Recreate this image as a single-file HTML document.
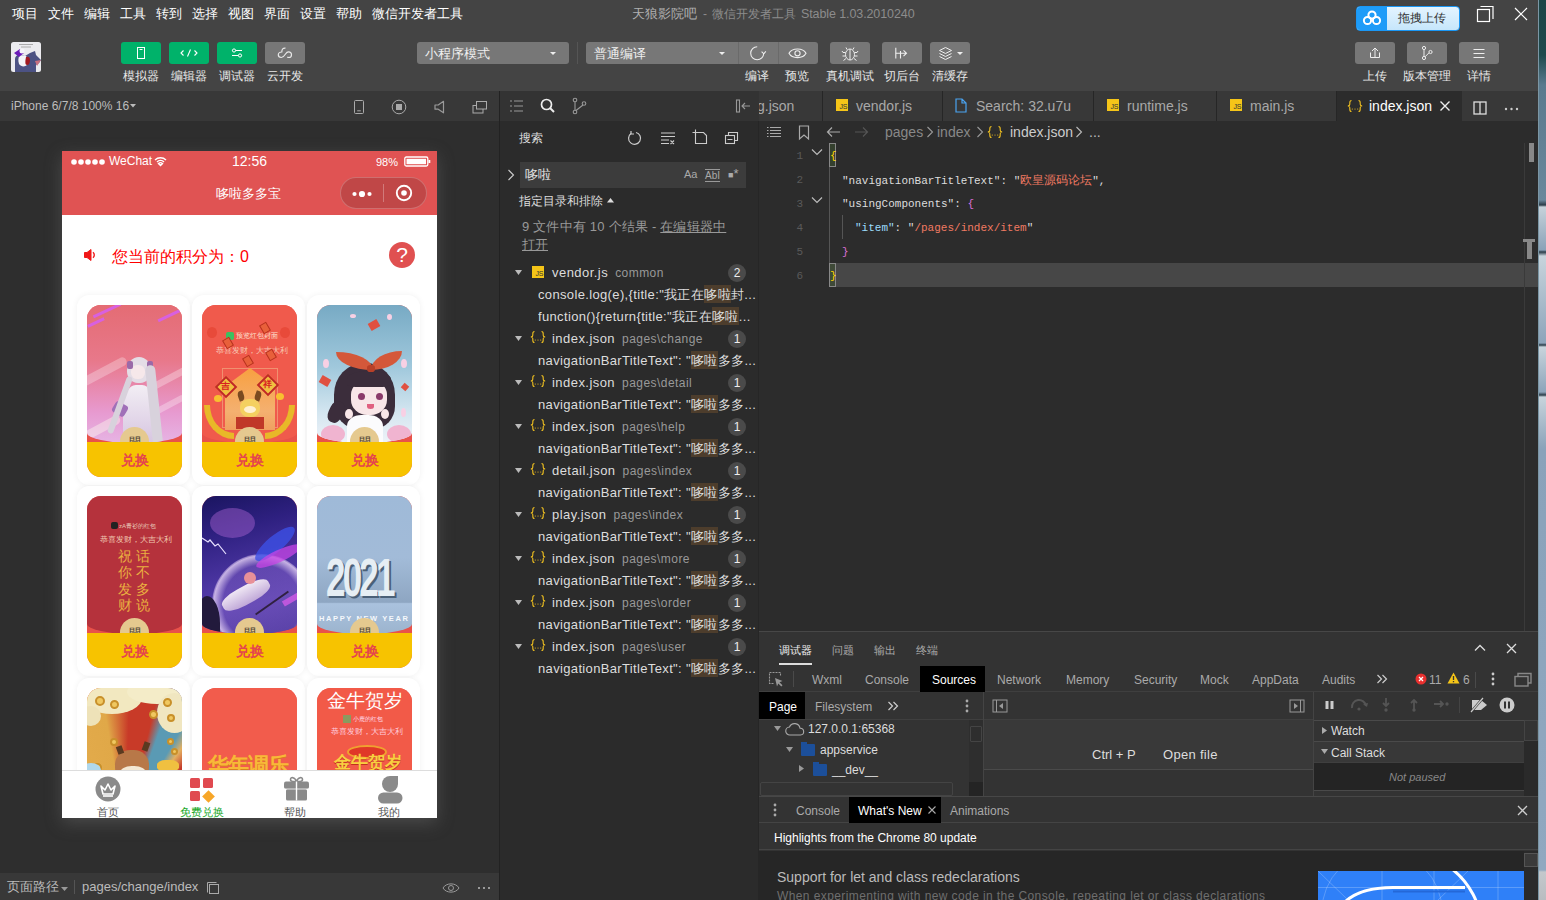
<!DOCTYPE html>
<html><head><meta charset="utf-8">
<style>
*{margin:0;padding:0;box-sizing:border-box}
html,body{width:1546px;height:900px;overflow:hidden;background:#2e2e2e}
body{font-family:"Liberation Sans",sans-serif;position:relative;color:#ddd}
.a{position:absolute}
.t{position:absolute;white-space:nowrap;line-height:1}
svg{position:absolute;overflow:visible}
/* top */
#top{left:0;top:0;width:1538px;height:91px;background:#444}
.menu{top:7px;font-size:13px;color:#fff}
.gbtn{top:42px;width:40px;height:22px;border-radius:3px;background:#00b26a}
.hbtn{top:42px;height:22px;border-radius:3px;background:#777}
.lbl{top:70px;font-size:12px;color:#e8e8e8;text-align:center;width:60px}
#strip{left:1538px;top:0;width:8px;height:900px;border-left:1px solid #7b96a4;background:linear-gradient(#1d4547 0,#1f4a4d 55px,#5a7a8e 85px,#6a889c 200px,#2a3c48 205px,#c6d2da 207px,#8aa2b8 250px,#2a3c48 252px,#c8d4dc 256px,#8ca4ba 343px,#2a3c48 345px,#c8d4dc 347px,#8ca4ba 392px,#2a3c48 395px,#c8d4dc 397px,#8ca4ba 447px,#8aa2ba 450px,#90a8c0 870px,#c4c8cc 872px,#b8bcc0 900px)}

#sim{left:0;top:91px;width:500px;height:809px;background:#2e2e2e}
#devbar{left:0;top:0;width:500px;height:30px;background:#383838}
#phone{left:62px;top:60px;width:375px;height:667px;background:#fff;overflow:hidden;box-shadow:0 5px 16px rgba(120,120,120,.38)}
.card{position:absolute;width:113px;height:190px;border-radius:12px;background:#fff;box-shadow:0 0 6px rgba(0,0,0,.06)}
.img{position:absolute;left:10px;top:10px;width:95px;height:172px;border-radius:14px;overflow:hidden;background:#e8524a}
.pic{position:absolute;left:0;top:0;width:95px;height:138px;overflow:hidden;border-radius:0 0 50% 50%/0 0 10px 10px}
.arc{display:none}
.coin{position:absolute;left:33px;top:122px;width:29px;height:29px;border-radius:50%;background:#e5c98f}
.coin:after{content:"開";position:absolute;left:0;top:9px;width:29px;text-align:center;font-size:12px;line-height:12px;color:#4a4030}
.yb{position:absolute;left:0;top:137px;width:95px;height:35px;background:#f7c300;color:#e5454d;font-size:14px;text-align:center;line-height:36px;font-weight:bold}
.tabi{position:absolute;top:656px;font-size:11px;color:#555;text-align:center;width:60px;line-height:1;white-space:nowrap}
</style></head>
<body>
<div id="strip" class="a"></div>
<div id="sim" class="a">
  <div id="devbar" class="a">
    <div class="t" style="left:11px;top:9px;font-size:12px;color:#bdbdbd">iPhone 6/7/8 100% 16</div>
    <svg style="left:130px;top:13px" width="6" height="4"><path d="M0 0h6l-3 3.5z" fill="#bbb"/></svg>
    <svg style="left:353px;top:8px" width="14" height="16"><rect x="1.5" y="1.5" width="9" height="13" rx="1" fill="none" stroke="#aaa" stroke-width="1"/><line x1="4.2" y1="11.8" x2="7.8" y2="11.8" stroke="#aaa"/></svg>
    <svg style="left:391px;top:8px" width="16" height="16"><circle cx="8" cy="8" r="6.8" fill="none" stroke="#aaa" stroke-width="1"/><rect x="5" y="5" width="6" height="6" fill="#aaa"/></svg>
    <svg style="left:433px;top:7px" width="14" height="18"><path d="M2 7h3.2L10.5 3.3v11.5L5.2 11.2H2z" fill="none" stroke="#999" stroke-width="1.2" stroke-linejoin="round"/></svg>
    <svg style="left:472px;top:9px" width="16" height="16"><rect x="1" y="5.5" width="10" height="7.5" fill="none" stroke="#aaa"/><rect x="4.5" y="1.5" width="10" height="7.5" fill="#383838" stroke="#aaa"/></svg>
  </div>
  <div id="phone" class="a">
    <div class="a" style="left:0;top:0;width:375px;height:64px;background:#e05353"></div>
    <svg style="left:9px;top:6px" width="60" height="10"><g fill="#fff"><circle cx="3" cy="5" r="2.8"/><circle cx="10" cy="5" r="2.8"/><circle cx="17" cy="5" r="2.8"/><circle cx="24" cy="5" r="2.8"/><circle cx="31" cy="5" r="2.8"/></g></svg>
    <div class="t" style="left:47px;top:4px;font-size:12px;color:#fff">WeChat</div>
    <svg style="left:92px;top:4px" width="13" height="12"><path d="M1 5a8 8 0 0 1 11 0M3 7a5 5 0 0 1 7 0M6.5 10.5l-2-2a3 3 0 0 1 4 0z" fill="none" stroke="#fff" stroke-width="1.4"/></svg>
    <div class="t" style="left:170px;top:3px;font-size:14px;color:#fff">12:56</div>
    <div class="t" style="left:314px;top:6px;font-size:11px;color:#fff">98%</div>
    <svg style="left:342px;top:5px" width="27" height="12"><rect x="0.8" y="1" width="23" height="9" rx="1.5" fill="none" stroke="#fff" stroke-width="1.3"/><rect x="2.5" y="2.8" width="19.5" height="5.4" fill="#fff"/><rect x="24.5" y="4" width="1.8" height="3" fill="#fff"/></svg>
    <div class="t" style="left:154px;top:36px;font-size:13px;color:#fff">哆啦多多宝</div>
    <div class="a" style="left:278px;top:26px;width:87px;height:32px;border-radius:16px;background:rgba(0,0,0,.14);border:1px solid rgba(255,255,255,.22)"></div>
    <div class="a" style="left:321px;top:33px;width:1px;height:18px;background:rgba(255,255,255,.28)"></div>
    <svg style="left:286px;top:38px" width="30" height="10"><g fill="#fff"><circle cx="6.5" cy="5" r="2.1"/><circle cx="14" cy="5" r="3.1"/><circle cx="21.5" cy="5" r="2.1"/></g></svg>
    <svg style="left:333px;top:33px" width="18" height="18"><circle cx="9" cy="9" r="7.2" fill="none" stroke="#fff" stroke-width="1.9"/><circle cx="9" cy="9" r="2.8" fill="#fff"/></svg>
    <svg style="left:21px;top:98px" width="14" height="12"><path d="M1.5 3.5h2.5l4-3v11l-4-3h-2.5z" fill="#f01818" stroke="#f01818" stroke-width="1" stroke-linejoin="round"/><path d="M10 3.3a3.5 3.5 0 0 1 0 5.4" fill="none" stroke="#f01818" stroke-width="1.4"/></svg>
    <div class="t" style="left:50px;top:98px;font-size:16px;color:#ff0000">您当前的积分为：0</div>
    <div class="a" style="left:327px;top:91px;width:26px;height:26px;border-radius:50%;background:#e05050"></div>
    <div class="t" style="left:332px;top:93px;font-size:21px;color:#fff;width:16px;text-align:center;font-weight:300">?</div>
    <div class="card" style="left:15px;top:144px"><div class="img"><div class="pic" style="background:linear-gradient(#e46c74 0%,#e8788a 40%,#e79ad0 78%,#e6b4e4)"><div class="a" style="left:-8px;top:62px;width:50px;height:9px;border-radius:5px;background:rgba(255,255,255,.28);transform:rotate(-28deg)"></div><div class="a" style="left:62px;top:70px;width:40px;height:7px;border-radius:4px;background:rgba(255,255,255,.3);transform:rotate(-28deg)"></div><div class="a" style="left:60px;top:98px;width:40px;height:6px;border-radius:4px;background:rgba(255,255,255,.3);transform:rotate(-28deg)"></div><div class="a" style="left:-5px;top:118px;width:40px;height:9px;border-radius:5px;background:rgba(255,255,240,.4);transform:rotate(-28deg)"></div><div class="a" style="left:5px;top:4px;width:30px;height:3px;background:#d860e0;transform:rotate(-25deg)"></div><div class="a" style="left:0;top:16px;width:18px;height:3px;background:#d860e0;transform:rotate(-25deg)"></div><div class="a" style="left:70px;top:9px;width:25px;height:3px;background:#d860e0;transform:rotate(-25deg)"></div><div class="a" style="left:40px;top:52px;width:24px;height:26px;border-radius:50% 50% 45% 45%;background:#e4dde6"></div><div class="a" style="left:44px;top:60px;width:14px;height:14px;border-radius:45%;background:#f6e8ea"></div><div class="a" style="left:40px;top:56px;width:6px;height:8px;background:#9a6aa8;border-radius:2px"></div><div class="a" style="left:60px;top:56px;width:6px;height:8px;background:#9a6aa8;border-radius:2px"></div><div class="a" style="left:36px;top:80px;width:32px;height:60px;border-radius:40% 40% 0 0;background:linear-gradient(#f2eef4,#d6c4e0)"></div><div class="a" style="left:26px;top:98px;width:14px;height:12px;background:#a070b8;border-radius:3px;transform:rotate(30deg)"></div><div class="a" style="left:62px;top:60px;width:10px;height:80px;border-radius:5px;background:#d8d2dc;transform:rotate(-6deg)"></div><div class="a" style="left:30px;top:70px;width:6px;height:60px;border-radius:3px;background:#d8d2dc;transform:rotate(20deg)"></div></div><div class="arc"></div><div class="coin"></div><div class="yb">兑换</div></div></div>
    <div class="card" style="left:130px;top:144px"><div class="img"><div class="pic" style="background:#f05a4c"><div class="a" style="left:5px;top:22px;width:10px;height:11px;border-radius:50%;background:#e84a3a"></div><div class="a" style="left:78px;top:22px;width:10px;height:11px;border-radius:50%;background:#e84a3a"></div><div class="a" style="left:24px;top:27px;width:8px;height:8px;border-radius:2px;background:#3cc060"></div><div class="t" style="left:34px;top:28px;font-size:6.5px;color:#fde0d0">预览红包封面</div><div class="t" style="left:14px;top:42px;font-size:8px;color:#f8c8b4">恭喜发财，大吉大利</div><div class="a" style="left:20px;top:63px;width:56px;height:60px;border:1.5px solid #f09070"></div><div class="a" style="left:23px;top:63px;width:50px;height:62px;clip-path:polygon(50% 0,100% 30%,100% 100%,0 100%,0 30%);background:linear-gradient(#f8a040,#f4b070 70%,#f0a060)"></div><div class="a" style="left:59px;top:18px;width:8px;height:10px;background:#e8603a;border:1px solid #b83020;transform:rotate(-30deg)"></div><div class="a" style="left:22px;top:33px;width:8px;height:10px;background:#e8603a;border:1px solid #b83020;transform:rotate(-30deg)"></div><div class="a" style="left:42px;top:51px;width:8px;height:10px;background:#e8603a;border:1px solid #b83020;transform:rotate(-30deg)"></div><div class="a" style="left:65px;top:45px;width:8px;height:10px;background:#e8603a;border:1px solid #b83020;transform:rotate(-30deg)"></div><div class="a" style="left:16px;top:74px;width:16px;height:16px;background:#f0c040;transform:rotate(45deg);border:2px solid #c02828"></div><div class="t" style="left:18.5px;top:77px;font-size:9px;color:#d82020;font-weight:bold">吉</div><div class="a" style="left:58px;top:72px;width:16px;height:16px;background:#f0c040;transform:rotate(45deg);border:2px solid #c02828"></div><div class="t" style="left:61px;top:75px;font-size:9px;color:#d82020;font-weight:bold">祥</div><div class="a" style="left:36px;top:86px;width:6px;height:10px;border-radius:50% 0;background:#7a4a20;transform:rotate(-20deg)"></div><div class="a" style="left:53px;top:86px;width:6px;height:10px;border-radius:0 50%;background:#7a4a20;transform:rotate(20deg)"></div><div class="a" style="left:38px;top:94px;width:20px;height:18px;border-radius:45%;background:#f4d060"></div><div class="a" style="left:42px;top:101px;width:12px;height:7px;border-radius:50%;background:#fff0d0"></div><div class="a" style="left:34px;top:112px;width:28px;height:12px;background:#c03828"></div><div class="a" style="left:12px;top:90px;width:8px;height:7px;border-radius:50%;background:#f8c030"></div><div class="a" style="left:74px;top:88px;width:8px;height:7px;border-radius:50%;background:#f8c030"></div><div class="a" style="left:2px;top:100px;width:30px;height:34px;border-radius:0 0 0 100%;border-left:6px solid #e8b828;border-bottom:6px solid #e8b828"></div><div class="a" style="left:63px;top:100px;width:30px;height:34px;border-radius:0 0 100% 0;border-right:6px solid #e8b828;border-bottom:6px solid #e8b828"></div></div><div class="arc"></div><div class="coin"></div><div class="yb">兑换</div></div></div>
    <div class="card" style="left:245px;top:144px"><div class="img"><div class="pic" style="background:linear-gradient(#77aac4 0%,#a0c8dc 45%,#d4e6f0 78%,#eef2f8)"><div class="a" style="left:17px;top:58px;width:61px;height:66px;border-radius:48% 48% 35% 40%;background:#3b2d3b"></div><div class="a" style="left:12px;top:96px;width:14px;height:22px;border-radius:40%;background:#3b2d3b;transform:rotate(25deg)"></div><div class="a" style="left:34px;top:76px;width:36px;height:34px;border-radius:40% 40% 45% 45%;background:#f8e6e8"></div><div class="a" style="left:30px;top:66px;width:44px;height:16px;border-radius:50% 50% 20% 20%;background:#3b2d3b"></div><div class="a" style="left:41px;top:88px;width:7px;height:7px;border-radius:50%;background:#8a3a6a"></div><div class="a" style="left:59px;top:88px;width:7px;height:7px;border-radius:50%;background:#8a3a6a"></div><div class="a" style="left:50px;top:99px;width:7px;height:5px;border-radius:0 0 50% 50%;background:#e06080"></div><div class="a" style="left:19px;top:47px;width:37px;height:18px;border-radius:0 100% 0 100%;background:#d4583a"></div><div class="a" style="left:54px;top:46px;width:31px;height:19px;border-radius:100% 0 100% 0;background:#d4583a"></div><div class="a" style="left:50px;top:60px;width:8px;height:7px;border-radius:40%;background:#b84028"></div><div class="a" style="left:30px;top:110px;width:36px;height:28px;border-radius:40% 40% 0 0;background:#fbfbfd"></div><div class="a" style="left:28px;top:104px;width:8px;height:10px;border-radius:50%;background:#f8e6e8"></div><div class="a" style="left:64px;top:104px;width:8px;height:10px;border-radius:50%;background:#f8e6e8"></div><div class="a" style="left:4px;top:120px;width:24px;height:18px;border-radius:50%;background:#f0b4d0"></div><div class="a" style="left:70px;top:120px;width:24px;height:18px;border-radius:50%;background:#f0b4d0"></div><div class="a" style="left:52px;top:16px;width:10px;height:8px;background:#e05040;transform:rotate(-30deg)"></div><div class="a" style="left:3px;top:72px;width:10px;height:8px;background:#e05040;transform:rotate(30deg)"></div><div class="a" style="left:85px;top:79px;width:6px;height:6px;background:#e05040;transform:rotate(40deg)"></div><div class="a" style="left:6px;top:54px;width:6px;height:9px;border-radius:50%;background:#f8d0e4"></div><div class="a" style="left:84px;top:54px;width:6px;height:9px;border-radius:50%;background:#f8d0e4"></div><div class="a" style="left:33px;top:9px;width:6px;height:4px;border-radius:50%;background:#f8d0e4"></div><div class="a" style="left:70px;top:9px;width:5px;height:6px;border-radius:50%;background:#f8d0e4"></div><div class="a" style="left:84px;top:103px;width:5px;height:9px;border-radius:50%;background:#f8d0e4"></div></div><div class="arc"></div><div class="coin"></div><div class="yb">兑换</div></div></div>
    <div class="card" style="left:15px;top:335px"><div class="img"><div class="pic" style="background:#b5323c"><div class="a" style="left:24px;top:26px;width:7px;height:7px;border-radius:2px;background:#222"></div><div class="t" style="left:32px;top:27px;font-size:6px;color:#e8c8b8">zA青衫的红包</div><div class="t" style="left:13px;top:40px;font-size:7.5px;color:#f0c8b0">恭喜发财，大吉大利</div><div class="t" style="left:31px;top:53px;font-size:14px;line-height:16.3px;color:#eab040;white-space:normal;width:40px;letter-spacing:4px;font-family:Liberation Serif,serif">祝话你不发多财说</div></div><div class="arc"></div><div class="coin"></div><div class="yb">兑换</div></div></div>
    <div class="card" style="left:130px;top:335px"><div class="img"><div class="pic" style="background:linear-gradient(165deg,#1a1560 0%,#2e2080 25%,#4a34a0 55%,#5a40b0 75%,#3a2890 100%)"><div class="a" style="left:8px;top:12px;width:45px;height:30px;border-radius:50%;background:rgba(170,100,210,.45)"></div><div class="a" style="left:10px;top:58px;width:100px;height:100px;border-radius:50%;background:radial-gradient(circle,rgba(120,90,190,.5) 55%,rgba(220,200,240,.85) 68%,rgba(160,130,210,.3) 72%,transparent 74%)"></div><div class="a" style="left:48px;top:40px;width:50px;height:16px;border-radius:50%;background:rgba(60,80,230,.8);transform:rotate(-40deg)"></div><div class="a" style="left:52px;top:54px;width:50px;height:12px;border-radius:50%;background:rgba(200,70,230,.75);transform:rotate(-25deg)"></div><div class="a" style="left:80px;top:100px;width:20px;height:6px;background:rgba(210,90,230,.8);transform:rotate(-30deg)"></div><svg style="left:0;top:40px" width="30" height="30"><path d="M0 2l6 4 2-2 5 6 3-2 8 10" fill="none" stroke="#e8e0ff" stroke-width="1.2"/></svg><div class="a" style="left:18px;top:90px;width:52px;height:18px;border-radius:40%;background:linear-gradient(#f0e8f4,#c0a8d8);transform:rotate(-28deg)"></div><div class="a" style="left:42px;top:76px;width:12px;height:12px;border-radius:50%;background:#e89098"></div><div class="a" style="left:50px;top:106px;width:40px;height:2px;background:#302040;transform:rotate(-35deg)"></div><div class="a" style="left:-4px;top:100px;width:22px;height:45px;background:#221a3c;border-radius:40% 60% 0 0"></div></div><div class="arc"></div><div class="coin"></div><div class="yb">兑换</div></div></div>
    <div class="card" style="left:245px;top:335px"><div class="img"><div class="pic" style="background:linear-gradient(#9fbad8 0,#a2bbd8 45%,#8ea6c2 77%,#aac2de 78%,#9cb4ce 100%)"><div class="t" style="left:9px;top:55px;font-size:38px;font-weight:bold;color:#e6eef4;letter-spacing:-3px;transform:scale(0.92,1.42);transform-origin:0 0;text-shadow:2px 1px 0 #4a6078">2021</div><div class="t" style="left:2px;top:119px;font-size:7.5px;font-weight:bold;color:#f4f8fc;letter-spacing:1.6px">HAPPY NEW YEAR</div></div><div class="arc"></div><div class="coin"></div><div class="yb">兑换</div></div></div>
    <div class="card" style="left:15px;top:527px"><div class="img"><div class="pic" style="background:conic-gradient(from -10deg at 40% 100%,#e0a848 0deg,#c83a28 12deg,#c83a28 24deg,#5a9ab4 30deg,#5a9ab4 40deg,#e4b060 46deg,#c43a2a 54deg,#c43a2a 68deg,#6aa8c0 74deg,#e0a040 85deg,#d89040 260deg,#e8b050 300deg,#e0a848 360deg)"><div class="a" style="left:-5px;top:-6px;width:60px;height:32px;border-radius:50%;background:#f2e8c0"></div><div class="a" style="left:40px;top:-8px;width:60px;height:24px;border-radius:50%;background:#f4ecc8"></div><div class="a" style="left:70px;top:5px;width:35px;height:40px;border-radius:50%;background:#f0e6c0"></div><div class="a" style="left:-6px;top:18px;width:20px;height:20px;border-radius:50%;background:#eee2b8"></div><div class="a" style="left:8px;top:8px;width:10px;height:10px;border-radius:50%;border:2px solid #c8902a;background:#f0c860"></div><div class="a" style="left:23px;top:12px;width:9px;height:9px;border-radius:50%;border:2px solid #c8902a;background:#f0c860"></div><div class="a" style="left:62px;top:22px;width:9px;height:9px;border-radius:50%;border:2px solid #c8902a;background:#f0c860"></div><div class="a" style="left:76px;top:10px;width:9px;height:9px;border-radius:50%;border:2px solid #c8902a;background:#f0c860"></div><div class="a" style="left:80px;top:26px;width:8px;height:8px;border-radius:50%;border:2px solid #c8902a;background:#f0c860"></div><div class="a" style="left:80px;top:50px;width:7px;height:7px;border-radius:50%;border:2px solid #c8902a;background:#f0c860"></div><div class="a" style="left:84px;top:60px;width:7px;height:7px;border-radius:50%;border:2px solid #c8902a;background:#f0c860"></div><div class="a" style="left:23px;top:50px;width:8px;height:8px;border-radius:50%;border:2px solid #c8902a;background:#f0c860"></div><div class="a" style="left:6px;top:75px;width:9px;height:9px;border-radius:50%;border:2px solid #c8902a;background:#f0c860"></div><div class="a" style="left:28px;top:62px;width:34px;height:32px;border-radius:45%;background:#b87848"></div><div class="a" style="left:30px;top:58px;width:6px;height:8px;background:#5a3a20;transform:rotate(-20deg)"></div><div class="a" style="left:56px;top:54px;width:6px;height:9px;background:#5a3a20;transform:rotate(20deg)"></div><div class="a" style="left:33px;top:78px;width:26px;height:16px;border-radius:45%;background:#f4e8d4"></div><div class="a" style="left:38px;top:84px;width:14px;height:4px;border-radius:40%;background:#8a3030"></div><div class="a" style="left:-6px;top:75px;width:20px;height:14px;border-radius:50%;background:#b0d8ec"></div><div class="a" style="left:70px;top:72px;width:22px;height:12px;border-radius:40%;background:#f0c040"></div></div><div class="arc"></div><div class="coin"></div><div class="yb">兑换</div></div></div>
    <div class="card" style="left:130px;top:527px"><div class="img"><div class="pic" style="background:#f25c4c"><div class="t" style="left:6px;top:66px;font-size:21px;font-weight:bold;color:#f8b838;letter-spacing:-1px;text-shadow:0 1px 0 #d88020">华年调乐</div></div><div class="arc"></div><div class="coin"></div><div class="yb">兑换</div></div></div>
    <div class="card" style="left:245px;top:527px"><div class="img"><div class="pic" style="background:#f25a48"><div class="t" style="left:10px;top:3px;font-size:19px;color:#fff">金牛贺岁</div><div class="a" style="left:26px;top:27px;width:8px;height:8px;background:#8a9a60"></div><div class="t" style="left:36px;top:28px;font-size:6px;color:#fde">小鹿的红包</div><div class="t" style="left:14px;top:40px;font-size:7.5px;color:#fcd">恭喜发财，大吉大利</div><div class="a" style="left:30px;top:57px;width:40px;height:14px;border-radius:50%;background:#e03828;border:2px solid #f0a030"></div><div class="t" style="left:17px;top:66px;font-size:17px;font-weight:bold;color:#f8d040;text-shadow:0 1px 0 #c03020">金牛贺岁</div></div><div class="arc"></div><div class="coin"></div><div class="yb">兑换</div></div></div>
    <div class="a" style="left:0;top:619px;width:375px;height:48px;background:#fff;border-top:1px solid #ddd"></div>
    <svg style="left:33px;top:625px" width="28" height="28"><circle cx="13" cy="13" r="12.5" fill="#8a8a8a"/><path d="M6 10l4 4 3-6 3 6 4-4-2 8h-10z" fill="none" stroke="#fff" stroke-width="1.6" stroke-linejoin="round"/><line x1="8" y1="20" x2="18" y2="20" stroke="#fff" stroke-width="1.6"/></svg>
    <svg style="left:127px;top:626px" width="30" height="28"><rect x="1" y="1" width="10" height="10" rx="1.5" fill="#e04a50"/><rect x="14" y="1" width="10" height="10" rx="1.5" fill="#e04a50"/><rect x="1" y="14" width="10" height="10" rx="1.5" fill="#e04a50"/><rect x="15" y="15" width="9" height="9" fill="#f7a628" transform="rotate(45 19.5 19.5)"/></svg>
    <svg style="left:220px;top:624px" width="30" height="28"><path d="M14.5 6.5C13 2 8.5 1.5 8.5 4.5c0 1.3 1.5 2 3 2zM14.5 6.5C16 2 20.5 1.5 20.5 4.5c0 1.3-1.5 2-3 2z" fill="none" stroke="#8a8a8a" stroke-width="1.6"/><rect x="2" y="6.5" width="25" height="7.5" rx="2" fill="#8a8a8a"/><rect x="4" y="14" width="21" height="11.5" rx="1.5" fill="#8a8a8a"/><line x1="14.5" y1="6.5" x2="14.5" y2="25.5" stroke="#fff" stroke-width="1.4"/><line x1="2" y1="14" x2="27" y2="14" stroke="#fff" stroke-width="0.8"/></svg>
    <svg style="left:314px;top:623px" width="28" height="30"><path d="M6 10a8 8 0 0 1 8-8h8v8a8 8 0 0 1-16 0z" fill="#8a8a8a"/><rect x="2" y="18.5" width="24.5" height="11" rx="5.5" fill="#8a8a8a"/></svg>
    <div class="tabi" style="left:16px">首页</div>
    <div class="tabi" style="left:110px;color:#16a826">免费兑换</div>
    <div class="tabi" style="left:203px">帮助</div>
    <div class="tabi" style="left:297px">我的</div>
  </div>
  <div class="a" style="left:0;top:782px;width:500px;height:27px;background:#383838"></div>
  <div class="t" style="left:7px;top:789px;font-size:13px;color:#bbb">页面路径</div>
  <svg style="left:61px;top:796px" width="7" height="5"><path d="M0 0h7l-3.5 4z" fill="#999"/></svg>
  <div class="a" style="left:74px;top:789px;width:1px;height:14px;background:#555"></div>
  <div class="t" style="left:82px;top:789px;font-size:13px;color:#bbb">pages/change/index</div>
  <svg style="left:206px;top:790px" width="14" height="14"><path d="M1.5 11.5v-10h9" fill="none" stroke="#aaa"/><rect x="3.5" y="3.5" width="9" height="9" fill="none" stroke="#aaa"/></svg>
  <svg style="left:442px;top:791px" width="18" height="12"><path d="M1 6c3-5.5 13-5.5 16 0-3 5.5-13 5.5-16 0z" fill="none" stroke="#999"/><circle cx="9" cy="6" r="2.5" fill="none" stroke="#999"/></svg>
  <svg style="left:477px;top:795px" width="14" height="4"><g fill="#999"><rect x="1" y="1" width="2" height="2"/><rect x="6" y="1" width="2" height="2"/><rect x="11" y="1" width="2" height="2"/></g></svg>
</div>
<div class="a" style="left:499px;top:91px;width:1px;height:809px;background:#222"></div>
<div id="search" class="a" style="left:500px;top:91px;width:259px;height:809px;background:#2b2b2b">
  <div class="a" style="left:0;top:0;width:259px;height:30px;background:#333"></div>
  <svg style="left:9px;top:8px" width="16" height="14"><g stroke="#999" stroke-width="1.2"><path d="M1 2h2M1 7h2M1 12h2M5 2h9M5 7h9M5 12h9"/></g></svg>
  <svg style="left:40px;top:7px" width="16" height="16"><circle cx="6.5" cy="6.5" r="5" fill="none" stroke="#eee" stroke-width="1.7"/><path d="M10 10l4 4" stroke="#eee" stroke-width="1.9"/></svg>
  <svg style="left:72px;top:6px" width="16" height="18"><g fill="none" stroke="#999" stroke-width="1.1"><circle cx="3" cy="3" r="1.8"/><circle cx="3" cy="15" r="1.8"/><circle cx="12" cy="6.5" r="1.8"/><path d="M3 4.8v8.4M11 8l-7 5.5"/></g></svg>
  <svg style="left:236px;top:8px" width="16" height="14"><g fill="none" stroke="#999" stroke-width="1.1"><rect x="0.5" y="1" width="3" height="12"/><path d="M14 7h-8M9 4l-3 3 3 3"/></g></svg>
  <div class="t" style="left:19px;top:41px;font-size:12px;color:#ddd">搜索</div>
  <svg style="left:127px;top:39px" width="16" height="16"><path d="M4 3.5a6 6 0 1 0 5-1" fill="none" stroke="#ccc" stroke-width="1.2"/><path d="M4 1v3h3" fill="none" stroke="#ccc" stroke-width="1.2"/></svg>
  <svg style="left:160px;top:40px" width="16" height="14"><g stroke="#ccc" stroke-width="1.1" fill="none"><path d="M1 2h14M1 5.5h14M1 9h8M1 12.5h8M10.5 9.5l3.5 3.5M14 9.5l-3.5 3.5"/></g></svg>
  <svg style="left:192px;top:38px" width="16" height="16"><g stroke="#ccc" stroke-width="1.1" fill="none"><path d="M3.5 3.5v11h11v-8l-3-3h-8"/><path d="M0.5 3.5h6M3.5 0.5v6"/></g></svg>
  <svg style="left:225px;top:40px" width="16" height="14"><g stroke="#ccc" stroke-width="1.1" fill="none"><rect x="0.5" y="4.5" width="9" height="8"/><path d="M3.5 4.5v-3h9v8h-3M2.5 8.5h5"/></g></svg>
  <svg style="left:7px;top:78px" width="8" height="12"><path d="M1.5 1l5 5-5 5" fill="none" stroke="#ccc" stroke-width="1.1"/></svg>
  <div class="a" style="left:20px;top:71px;width:226px;height:26px;background:#3c3c3c"></div>
  <div class="t" style="left:25px;top:77px;font-size:13px;color:#e0e0e0">哆啦</div>
  <div class="t" style="left:184px;top:78px;font-size:11px;color:#aaa">Aa</div>
  <div class="t" style="left:205px;top:78px;font-size:10px;color:#aaa;border-top:1px solid #999;border-bottom:1px solid #999;line-height:11px">AbI</div>
  <div class="t" style="left:228px;top:76px;font-size:13px;color:#aaa"><span style="font-size:9px">■</span>*</div>
  <div class="t" style="left:19px;top:104px;font-size:12px;color:#ddd">指定目录和排除</div>
  <svg style="left:107px;top:106px" width="8" height="6"><path d="M0 5.5h7l-3.5-4.5z" fill="#ddd"/></svg>
  <div class="t" style="left:22px;top:129px;font-size:13px;color:#999;letter-spacing:.2px">9 文件中有 10 个结果 - <span style="text-decoration:underline">在编辑器中</span></div>
  <div class="t" style="left:22px;top:147px;font-size:13px;color:#999;text-decoration:underline">打开</div>
  <svg style="left:15px;top:179px" width="8" height="6"><path d="M0 0h7l-3.5 5z" fill="#bbb"/></svg>
  <div class="a" style="left:32px;top:175px;width:12px;height:12px;background:#f5c518"><div class="t" style="left:3.5px;top:4px;font-size:7px;color:#333;letter-spacing:-.3px">JS</div></div>
  <div class="t" style="left:52px;top:175px;font-size:13px;color:#ddd;letter-spacing:.45px"><span>vendor.js</span> <span style="font-size:12px;color:#999;margin-left:3px">common</span></div>
  <div class="a" style="left:228px;top:173px;width:18px;height:18px;border-radius:50%;background:#4a4a4a"><div class="t" style="left:0;top:3px;width:18px;text-align:center;font-size:12px;color:#eee">2</div></div>
  <div class="t" style="left:38px;top:194px;font-size:13px;line-height:19px;color:#ddd;width:222px;overflow:hidden;letter-spacing:.35px">console.log(e),{title:"我正在<span style="background:#4d3d2c;padding:3px 0 1px">哆啦</span>封...</div>
  <div class="t" style="left:38px;top:216px;font-size:13px;line-height:19px;color:#ddd;width:222px;overflow:hidden;letter-spacing:.35px">function(){return{title:"我正在<span style="background:#4d3d2c;padding:3px 0 1px">哆啦</span>...</div>
  <svg style="left:15px;top:245px" width="8" height="6"><path d="M0 0h7l-3.5 5z" fill="#bbb"/></svg>
  <svg style="left:30px;top:240px" width="16" height="12"><path d="M4.5 0.5C3 0.5 2.8 1.3 2.8 2.8V4.3C2.8 5.3 2 6 0.8 6 2 6 2.8 6.7 2.8 7.7V9.2C2.8 10.7 3 11.5 4.5 11.5M11.5 0.5C13 0.5 13.2 1.3 13.2 2.8V4.3C13.2 5.3 14 6 15.2 6 14 6 13.2 6.7 13.2 7.7V9.2C13.2 10.7 13 11.5 11.5 11.5" fill="none" stroke="#f0c020" stroke-width="1.1"/><g fill="#f0c020"><circle cx="5.3" cy="9" r=".6"/><circle cx="8" cy="9" r=".6"/><circle cx="10.7" cy="9" r=".6"/></g></svg>
  <div class="t" style="left:52px;top:241px;font-size:13px;color:#ddd;letter-spacing:.45px"><span>index.json</span> <span style="font-size:12px;color:#999;margin-left:3px">pages\change</span></div>
  <div class="a" style="left:228px;top:239px;width:18px;height:18px;border-radius:50%;background:#4a4a4a"><div class="t" style="left:0;top:3px;width:18px;text-align:center;font-size:12px;color:#eee">1</div></div>
  <div class="t" style="left:38px;top:260px;font-size:13px;line-height:19px;color:#ddd;width:222px;overflow:hidden;letter-spacing:.35px">navigationBarTitleText": "<span style="background:#4d3d2c;padding:3px 0 1px">哆啦</span>多多...</div>
  <svg style="left:15px;top:289px" width="8" height="6"><path d="M0 0h7l-3.5 5z" fill="#bbb"/></svg>
  <svg style="left:30px;top:284px" width="16" height="12"><path d="M4.5 0.5C3 0.5 2.8 1.3 2.8 2.8V4.3C2.8 5.3 2 6 0.8 6 2 6 2.8 6.7 2.8 7.7V9.2C2.8 10.7 3 11.5 4.5 11.5M11.5 0.5C13 0.5 13.2 1.3 13.2 2.8V4.3C13.2 5.3 14 6 15.2 6 14 6 13.2 6.7 13.2 7.7V9.2C13.2 10.7 13 11.5 11.5 11.5" fill="none" stroke="#f0c020" stroke-width="1.1"/><g fill="#f0c020"><circle cx="5.3" cy="9" r=".6"/><circle cx="8" cy="9" r=".6"/><circle cx="10.7" cy="9" r=".6"/></g></svg>
  <div class="t" style="left:52px;top:285px;font-size:13px;color:#ddd;letter-spacing:.45px"><span>index.json</span> <span style="font-size:12px;color:#999;margin-left:3px">pages\detail</span></div>
  <div class="a" style="left:228px;top:283px;width:18px;height:18px;border-radius:50%;background:#4a4a4a"><div class="t" style="left:0;top:3px;width:18px;text-align:center;font-size:12px;color:#eee">1</div></div>
  <div class="t" style="left:38px;top:304px;font-size:13px;line-height:19px;color:#ddd;width:222px;overflow:hidden;letter-spacing:.35px">navigationBarTitleText": "<span style="background:#4d3d2c;padding:3px 0 1px">哆啦</span>多多...</div>
  <svg style="left:15px;top:333px" width="8" height="6"><path d="M0 0h7l-3.5 5z" fill="#bbb"/></svg>
  <svg style="left:30px;top:328px" width="16" height="12"><path d="M4.5 0.5C3 0.5 2.8 1.3 2.8 2.8V4.3C2.8 5.3 2 6 0.8 6 2 6 2.8 6.7 2.8 7.7V9.2C2.8 10.7 3 11.5 4.5 11.5M11.5 0.5C13 0.5 13.2 1.3 13.2 2.8V4.3C13.2 5.3 14 6 15.2 6 14 6 13.2 6.7 13.2 7.7V9.2C13.2 10.7 13 11.5 11.5 11.5" fill="none" stroke="#f0c020" stroke-width="1.1"/><g fill="#f0c020"><circle cx="5.3" cy="9" r=".6"/><circle cx="8" cy="9" r=".6"/><circle cx="10.7" cy="9" r=".6"/></g></svg>
  <div class="t" style="left:52px;top:329px;font-size:13px;color:#ddd;letter-spacing:.45px"><span>index.json</span> <span style="font-size:12px;color:#999;margin-left:3px">pages\help</span></div>
  <div class="a" style="left:228px;top:327px;width:18px;height:18px;border-radius:50%;background:#4a4a4a"><div class="t" style="left:0;top:3px;width:18px;text-align:center;font-size:12px;color:#eee">1</div></div>
  <div class="t" style="left:38px;top:348px;font-size:13px;line-height:19px;color:#ddd;width:222px;overflow:hidden;letter-spacing:.35px">navigationBarTitleText": "<span style="background:#4d3d2c;padding:3px 0 1px">哆啦</span>多多...</div>
  <svg style="left:15px;top:377px" width="8" height="6"><path d="M0 0h7l-3.5 5z" fill="#bbb"/></svg>
  <svg style="left:30px;top:372px" width="16" height="12"><path d="M4.5 0.5C3 0.5 2.8 1.3 2.8 2.8V4.3C2.8 5.3 2 6 0.8 6 2 6 2.8 6.7 2.8 7.7V9.2C2.8 10.7 3 11.5 4.5 11.5M11.5 0.5C13 0.5 13.2 1.3 13.2 2.8V4.3C13.2 5.3 14 6 15.2 6 14 6 13.2 6.7 13.2 7.7V9.2C13.2 10.7 13 11.5 11.5 11.5" fill="none" stroke="#f0c020" stroke-width="1.1"/><g fill="#f0c020"><circle cx="5.3" cy="9" r=".6"/><circle cx="8" cy="9" r=".6"/><circle cx="10.7" cy="9" r=".6"/></g></svg>
  <div class="t" style="left:52px;top:373px;font-size:13px;color:#ddd;letter-spacing:.45px"><span>detail.json</span> <span style="font-size:12px;color:#999;margin-left:3px">pages\index</span></div>
  <div class="a" style="left:228px;top:371px;width:18px;height:18px;border-radius:50%;background:#4a4a4a"><div class="t" style="left:0;top:3px;width:18px;text-align:center;font-size:12px;color:#eee">1</div></div>
  <div class="t" style="left:38px;top:392px;font-size:13px;line-height:19px;color:#ddd;width:222px;overflow:hidden;letter-spacing:.35px">navigationBarTitleText": "<span style="background:#4d3d2c;padding:3px 0 1px">哆啦</span>多多...</div>
  <svg style="left:15px;top:421px" width="8" height="6"><path d="M0 0h7l-3.5 5z" fill="#bbb"/></svg>
  <svg style="left:30px;top:416px" width="16" height="12"><path d="M4.5 0.5C3 0.5 2.8 1.3 2.8 2.8V4.3C2.8 5.3 2 6 0.8 6 2 6 2.8 6.7 2.8 7.7V9.2C2.8 10.7 3 11.5 4.5 11.5M11.5 0.5C13 0.5 13.2 1.3 13.2 2.8V4.3C13.2 5.3 14 6 15.2 6 14 6 13.2 6.7 13.2 7.7V9.2C13.2 10.7 13 11.5 11.5 11.5" fill="none" stroke="#f0c020" stroke-width="1.1"/><g fill="#f0c020"><circle cx="5.3" cy="9" r=".6"/><circle cx="8" cy="9" r=".6"/><circle cx="10.7" cy="9" r=".6"/></g></svg>
  <div class="t" style="left:52px;top:417px;font-size:13px;color:#ddd;letter-spacing:.45px"><span>play.json</span> <span style="font-size:12px;color:#999;margin-left:3px">pages\index</span></div>
  <div class="a" style="left:228px;top:415px;width:18px;height:18px;border-radius:50%;background:#4a4a4a"><div class="t" style="left:0;top:3px;width:18px;text-align:center;font-size:12px;color:#eee">1</div></div>
  <div class="t" style="left:38px;top:436px;font-size:13px;line-height:19px;color:#ddd;width:222px;overflow:hidden;letter-spacing:.35px">navigationBarTitleText": "<span style="background:#4d3d2c;padding:3px 0 1px">哆啦</span>多多...</div>
  <svg style="left:15px;top:465px" width="8" height="6"><path d="M0 0h7l-3.5 5z" fill="#bbb"/></svg>
  <svg style="left:30px;top:460px" width="16" height="12"><path d="M4.5 0.5C3 0.5 2.8 1.3 2.8 2.8V4.3C2.8 5.3 2 6 0.8 6 2 6 2.8 6.7 2.8 7.7V9.2C2.8 10.7 3 11.5 4.5 11.5M11.5 0.5C13 0.5 13.2 1.3 13.2 2.8V4.3C13.2 5.3 14 6 15.2 6 14 6 13.2 6.7 13.2 7.7V9.2C13.2 10.7 13 11.5 11.5 11.5" fill="none" stroke="#f0c020" stroke-width="1.1"/><g fill="#f0c020"><circle cx="5.3" cy="9" r=".6"/><circle cx="8" cy="9" r=".6"/><circle cx="10.7" cy="9" r=".6"/></g></svg>
  <div class="t" style="left:52px;top:461px;font-size:13px;color:#ddd;letter-spacing:.45px"><span>index.json</span> <span style="font-size:12px;color:#999;margin-left:3px">pages\more</span></div>
  <div class="a" style="left:228px;top:459px;width:18px;height:18px;border-radius:50%;background:#4a4a4a"><div class="t" style="left:0;top:3px;width:18px;text-align:center;font-size:12px;color:#eee">1</div></div>
  <div class="t" style="left:38px;top:480px;font-size:13px;line-height:19px;color:#ddd;width:222px;overflow:hidden;letter-spacing:.35px">navigationBarTitleText": "<span style="background:#4d3d2c;padding:3px 0 1px">哆啦</span>多多...</div>
  <svg style="left:15px;top:509px" width="8" height="6"><path d="M0 0h7l-3.5 5z" fill="#bbb"/></svg>
  <svg style="left:30px;top:504px" width="16" height="12"><path d="M4.5 0.5C3 0.5 2.8 1.3 2.8 2.8V4.3C2.8 5.3 2 6 0.8 6 2 6 2.8 6.7 2.8 7.7V9.2C2.8 10.7 3 11.5 4.5 11.5M11.5 0.5C13 0.5 13.2 1.3 13.2 2.8V4.3C13.2 5.3 14 6 15.2 6 14 6 13.2 6.7 13.2 7.7V9.2C13.2 10.7 13 11.5 11.5 11.5" fill="none" stroke="#f0c020" stroke-width="1.1"/><g fill="#f0c020"><circle cx="5.3" cy="9" r=".6"/><circle cx="8" cy="9" r=".6"/><circle cx="10.7" cy="9" r=".6"/></g></svg>
  <div class="t" style="left:52px;top:505px;font-size:13px;color:#ddd;letter-spacing:.45px"><span>index.json</span> <span style="font-size:12px;color:#999;margin-left:3px">pages\order</span></div>
  <div class="a" style="left:228px;top:503px;width:18px;height:18px;border-radius:50%;background:#4a4a4a"><div class="t" style="left:0;top:3px;width:18px;text-align:center;font-size:12px;color:#eee">1</div></div>
  <div class="t" style="left:38px;top:524px;font-size:13px;line-height:19px;color:#ddd;width:222px;overflow:hidden;letter-spacing:.35px">navigationBarTitleText": "<span style="background:#4d3d2c;padding:3px 0 1px">哆啦</span>多多...</div>
  <svg style="left:15px;top:553px" width="8" height="6"><path d="M0 0h7l-3.5 5z" fill="#bbb"/></svg>
  <svg style="left:30px;top:548px" width="16" height="12"><path d="M4.5 0.5C3 0.5 2.8 1.3 2.8 2.8V4.3C2.8 5.3 2 6 0.8 6 2 6 2.8 6.7 2.8 7.7V9.2C2.8 10.7 3 11.5 4.5 11.5M11.5 0.5C13 0.5 13.2 1.3 13.2 2.8V4.3C13.2 5.3 14 6 15.2 6 14 6 13.2 6.7 13.2 7.7V9.2C13.2 10.7 13 11.5 11.5 11.5" fill="none" stroke="#f0c020" stroke-width="1.1"/><g fill="#f0c020"><circle cx="5.3" cy="9" r=".6"/><circle cx="8" cy="9" r=".6"/><circle cx="10.7" cy="9" r=".6"/></g></svg>
  <div class="t" style="left:52px;top:549px;font-size:13px;color:#ddd;letter-spacing:.45px"><span>index.json</span> <span style="font-size:12px;color:#999;margin-left:3px">pages\user</span></div>
  <div class="a" style="left:228px;top:547px;width:18px;height:18px;border-radius:50%;background:#4a4a4a"><div class="t" style="left:0;top:3px;width:18px;text-align:center;font-size:12px;color:#eee">1</div></div>
  <div class="t" style="left:38px;top:568px;font-size:13px;line-height:19px;color:#ddd;width:222px;overflow:hidden;letter-spacing:.35px">navigationBarTitleText": "<span style="background:#4d3d2c;padding:3px 0 1px">哆啦</span>多多...</div>
  <div class="a" style="left:258px;top:30px;width:1px;height:779px;background:#262626"></div>
</div>
<div id="editor" class="a" style="left:759px;top:91px;width:779px;height:540px;background:#2c2c2c;overflow:hidden">
  <div class="a" style="left:0;top:0;width:779px;height:30px;background:#383838"></div>
  <!-- tabs -->
  <div class="a" style="left:0;top:0;width:64px;height:30px;background:#383838;border-right:1px solid #262626"></div>
  <div class="t" style="left:-2px;top:8px;font-size:14px;color:#a8a8a8">g.json</div>
  <div class="a" style="left:64px;top:0;width:120px;height:30px;border-right:1px solid #262626"></div>
  <div class="a" style="left:77px;top:8px;width:12px;height:12px;background:#f5c518"><div class="t" style="left:3.5px;top:4px;font-size:7px;color:#333;letter-spacing:-.3px">JS</div></div>
  <div class="t" style="left:97px;top:8px;font-size:14px;color:#a8a8a8">vendor.js</div>
  <div class="a" style="left:184px;top:0;width:151px;height:30px;border-right:1px solid #262626"></div>
  <svg style="left:196px;top:7px" width="12" height="15"><path d="M1 1h6l4 4v9h-10z M7 1v4h4" fill="none" stroke="#4aa3f0" stroke-width="1.2"/></svg>
  <div class="t" style="left:217px;top:8px;font-size:14px;color:#a8a8a8">Search: 32.u7u</div>
  <div class="a" style="left:335px;top:0;width:123px;height:30px;border-right:1px solid #262626"></div>
  <div class="a" style="left:348px;top:8px;width:12px;height:12px;background:#f5c518"><div class="t" style="left:3.5px;top:4px;font-size:7px;color:#333;letter-spacing:-.3px">JS</div></div>
  <div class="t" style="left:368px;top:8px;font-size:14px;color:#a8a8a8">runtime.js</div>
  <div class="a" style="left:458px;top:0;width:120px;height:30px;border-right:1px solid #262626"></div>
  <div class="a" style="left:471px;top:8px;width:12px;height:12px;background:#f5c518"><div class="t" style="left:3.5px;top:4px;font-size:7px;color:#333;letter-spacing:-.3px">JS</div></div>
  <div class="t" style="left:491px;top:8px;font-size:14px;color:#a8a8a8">main.js</div>
  <div class="a" style="left:578px;top:0;width:125px;height:30px;background:#2c2c2c"></div>
  <svg style="left:588px;top:9px" width="16" height="12"><path d="M4.5 0.5C3 0.5 2.8 1.3 2.8 2.8V4.3C2.8 5.3 2 6 0.8 6 2 6 2.8 6.7 2.8 7.7V9.2C2.8 10.7 3 11.5 4.5 11.5M11.5 0.5C13 0.5 13.2 1.3 13.2 2.8V4.3C13.2 5.3 14 6 15.2 6 14 6 13.2 6.7 13.2 7.7V9.2C13.2 10.7 13 11.5 11.5 11.5" fill="none" stroke="#f0c020" stroke-width="1.1"/><g fill="#f0c020"><circle cx="5.3" cy="9" r=".6"/><circle cx="8" cy="9" r=".6"/><circle cx="10.7" cy="9" r=".6"/></g></svg>
  <div class="t" style="left:610px;top:8px;font-size:14px;color:#fff">index.json</div>
  <svg style="left:680px;top:9px" width="12" height="12"><path d="M1.5 1.5l9 9M10.5 1.5l-9 9" stroke="#eee" stroke-width="1.4"/></svg>
  <svg style="left:714px;top:10px" width="14" height="14"><rect x="1" y="1" width="12" height="12" fill="none" stroke="#ddd" stroke-width="1.3"/><line x1="7" y1="1" x2="7" y2="13" stroke="#ddd" stroke-width="1.3"/></svg>
  <svg style="left:745px;top:16px" width="16" height="4"><g fill="#ccc"><circle cx="2" cy="2" r="1.2"/><circle cx="7.5" cy="2" r="1.2"/><circle cx="13" cy="2" r="1.2"/></g></svg>
  <!-- breadcrumb -->
  <svg style="left:7px;top:35px" width="16" height="13"><g stroke="#aaa" stroke-width="1.1"><path d="M1 1.5h1.5M1 4.5h1.5M1 7.5h1.5M1 10.5h1.5M4 1.5h11M4 4.5h11M4 7.5h11M4 10.5h11"/></g></svg>
  <svg style="left:39px;top:34px" width="12" height="15"><path d="M1.5 1h9v13l-4.5-4-4.5 4z" fill="none" stroke="#aaa" stroke-width="1.2"/></svg>
  <svg style="left:67px;top:35px" width="15" height="12"><path d="M14 6h-12M6 1.5l-4.5 4.5 4.5 4.5" fill="none" stroke="#aaa" stroke-width="1.2"/></svg>
  <svg style="left:95px;top:35px" width="15" height="12"><path d="M1 6h12M9 1.5l4.5 4.5-4.5 4.5" fill="none" stroke="#555" stroke-width="1.2"/></svg>
  <div class="t" style="left:126px;top:34px;font-size:14px;color:#888">pages</div>
  <svg style="left:167px;top:35px" width="8" height="12"><path d="M1.5 1l5 5-5 5" fill="none" stroke="#999" stroke-width="1.1"/></svg>
  <div class="t" style="left:178px;top:34px;font-size:14px;color:#888">index</div>
  <svg style="left:217px;top:35px" width="8" height="12"><path d="M1.5 1l5 5-5 5" fill="none" stroke="#999" stroke-width="1.1"/></svg>
  <svg style="left:228px;top:35px" width="16" height="12"><path d="M4.5 0.5C3 0.5 2.8 1.3 2.8 2.8V4.3C2.8 5.3 2 6 0.8 6 2 6 2.8 6.7 2.8 7.7V9.2C2.8 10.7 3 11.5 4.5 11.5M11.5 0.5C13 0.5 13.2 1.3 13.2 2.8V4.3C13.2 5.3 14 6 15.2 6 14 6 13.2 6.7 13.2 7.7V9.2C13.2 10.7 13 11.5 11.5 11.5" fill="none" stroke="#f0c020" stroke-width="1.1"/><g fill="#f0c020"><circle cx="5.3" cy="9" r=".6"/><circle cx="8" cy="9" r=".6"/><circle cx="10.7" cy="9" r=".6"/></g></svg>
  <div class="t" style="left:251px;top:34px;font-size:14px;color:#ccc">index.json</div>
  <svg style="left:316px;top:35px" width="8" height="12"><path d="M1.5 1l5 5-5 5" fill="none" stroke="#bbb" stroke-width="1.1"/></svg>
  <div class="t" style="left:330px;top:34px;font-size:14px;color:#bbb">...</div>
  <!-- code -->
  <div class="a" style="left:70px;top:172px;width:709px;height:24px;background:#474747"></div>
  <div class="a" style="left:765px;top:52px;width:1px;height:488px;background:#3a3a3a"></div>
  <div class="a" style="left:770px;top:52px;width:5px;height:19px;background:#888"></div>
  <div class="a" style="left:764px;top:148px;width:12px;height:3px;background:#888"></div>
  <div class="a" style="left:768px;top:148px;width:5px;height:20px;background:#888"></div>
  <div class="a" style="left:70px;top:52px;width:7px;height:24px;border:1px solid #888;background:#34402e"></div>
  <div class="a" style="left:70px;top:172px;width:7px;height:24px;border:1px solid #888;background:#3f4a38"></div>
  <div class="a" style="left:70px;top:76px;width:1px;height:96px;background:#555"></div>
  <div class="a" style="left:83px;top:124px;width:1px;height:24px;background:#555"></div>
  <div class="code" style="position:absolute;left:-1px;top:53px;font-family:'Liberation Mono',monospace;font-size:11px;line-height:24px;white-space:pre">
<div class="ln" style="position:absolute;left:31px;top:0;width:14px;text-align:right;color:#5a5a5a">1</div><div class="ln" style="position:absolute;left:31px;top:24px;width:14px;text-align:right;color:#5a5a5a">2</div><div class="ln" style="position:absolute;left:31px;top:48px;width:14px;text-align:right;color:#5a5a5a">3</div><div class="ln" style="position:absolute;left:31px;top:72px;width:14px;text-align:right;color:#5a5a5a">4</div><div class="ln" style="position:absolute;left:31px;top:96px;width:14px;text-align:right;color:#5a5a5a">5</div><div class="ln" style="position:absolute;left:31px;top:120px;width:14px;text-align:right;color:#5a5a5a">6</div>
<div style="position:absolute;left:72px;top:0;color:#ffd700">{</div>
<div style="position:absolute;left:84px;top:24px;color:#ddd">"navigationBarTitleText": "<span style="color:#f07a62;font-size:12px;font-family:Liberation Sans,sans-serif">欧皇源码论坛</span>",</div>
<div style="position:absolute;left:84px;top:48px;color:#ddd">"usingComponents": <span style="color:#da70d6">{</span></div>
<div style="position:absolute;left:97px;top:72px;color:#9cdcfe">"item"<span style="color:#ddd">: </span><span style="color:#ddd">"</span><span style="color:#f07a62">/pages/index/item</span><span style="color:#ddd">"</span></div>
<div style="position:absolute;left:84px;top:96px;color:#da70d6">}</div>
<div style="position:absolute;left:72px;top:120px;color:#ffd700">}</div>
  </div>
  <svg style="left:52px;top:57px" width="12" height="8"><path d="M1 1.5l5 5 5-5" fill="none" stroke="#bbb" stroke-width="1.2"/></svg>
  <svg style="left:52px;top:105px" width="12" height="8"><path d="M1 1.5l5 5 5-5" fill="none" stroke="#bbb" stroke-width="1.2"/></svg>
</div>
<div id="dev" class="a" style="left:759px;top:631px;width:779px;height:269px;background:#333;overflow:hidden">
  <div class="a" style="left:0;top:0;width:779px;height:1px;background:#474747"></div>
  <div class="t" style="left:20px;top:13.5px;font-size:11px;color:#eee">调试器</div>
  <div class="a" style="left:20px;top:32px;width:33px;height:2px;background:#ddd"></div>
  <div class="t" style="left:73px;top:13.5px;font-size:11px;color:#aaa">问题</div>
  <div class="t" style="left:115px;top:13.5px;font-size:11px;color:#aaa">输出</div>
  <div class="t" style="left:157px;top:13.5px;font-size:11px;color:#aaa">终端</div>
  <svg style="left:715px;top:13px" width="12" height="8"><path d="M1 6.5l5-5 5 5" fill="none" stroke="#ddd" stroke-width="1.3"/></svg>
  <svg style="left:747px;top:12px" width="11" height="11"><path d="M1 1l9 9M10 1l-9 9" stroke="#ddd" stroke-width="1.3"/></svg>
  <!-- toolbar -->
  <div class="a" style="left:0;top:35px;width:779px;height:26px;background:#333;border-bottom:1px solid #3f3f3f"></div>
  <svg style="left:9px;top:40px" width="16" height="16"><path d="M5.5 12.5h-4v-11h11v4" fill="none" stroke="#999" stroke-width="1.1" stroke-dasharray="2 1"/><path d="M7 7l7.5 3-3 1.2 3 3-1.2 1.2-3-3-1.3 3z" fill="#999"/></svg>
  <div class="a" style="left:34px;top:40px;width:1px;height:16px;background:#4a4a4a"></div>
  <div class="t" style="left:53px;top:43px;font-size:12px;color:#aaa">Wxml</div>
  <div class="t" style="left:106px;top:43px;font-size:12px;color:#aaa">Console</div>
  <div class="a" style="left:161px;top:35px;width:65px;height:26px;background:#000"></div>
  <div class="t" style="left:173px;top:43px;font-size:12px;color:#fff">Sources</div>
  <div class="t" style="left:238px;top:43px;font-size:12px;color:#aaa">Network</div>
  <div class="t" style="left:307px;top:43px;font-size:12px;color:#aaa">Memory</div>
  <div class="t" style="left:375px;top:43px;font-size:12px;color:#aaa">Security</div>
  <div class="t" style="left:441px;top:43px;font-size:12px;color:#aaa">Mock</div>
  <div class="t" style="left:493px;top:43px;font-size:12px;color:#aaa">AppData</div>
  <div class="t" style="left:563px;top:43px;font-size:12px;color:#aaa">Audits</div>
  <svg style="left:617px;top:43px" width="12" height="10"><path d="M1.5 1l4 4-4 4M6.5 1l4 4-4 4" fill="none" stroke="#ccc" stroke-width="1.2"/></svg>
  <svg style="left:656px;top:42px" width="12" height="12"><circle cx="6" cy="6" r="5.5" fill="#e8302f"/><path d="M4 4l4 4M8 4l-4 4" stroke="#fff" stroke-width="1.2"/></svg>
  <div class="t" style="left:670px;top:43px;font-size:12px;color:#aaa">11</div>
  <svg style="left:688px;top:41px" width="13" height="12"><path d="M6.5 0.5l6 11h-12z" fill="#f5c518"/><path d="M6.5 4v4M6.5 9v1.2" stroke="#333" stroke-width="1.3"/></svg>
  <div class="t" style="left:704px;top:43px;font-size:12px;color:#aaa">6</div>
  <div class="a" style="left:716px;top:41px;width:1px;height:16px;background:#4a4a4a"></div>
  <svg style="left:732px;top:41px" width="4" height="14"><g fill="#ccc"><circle cx="2" cy="2" r="1.4"/><circle cx="2" cy="7" r="1.4"/><circle cx="2" cy="12" r="1.4"/></g></svg>
  <svg style="left:755px;top:41px" width="18" height="15"><rect x="1" y="4.5" width="13" height="9.5" fill="none" stroke="#888" stroke-width="1.4"/><path d="M4 4.5v-3h13v9.5h-3" fill="none" stroke="#888" stroke-width="1.4"/></svg>
  <!-- sources panel -->
  <div class="a" style="left:0;top:61px;width:224px;height:28px;background:#333;border-bottom:1px solid #3f3f3f"></div>
  <div class="a" style="left:0;top:61px;width:46px;height:27px;background:#000"></div>
  <div class="t" style="left:10px;top:70px;font-size:12px;color:#fff">Page</div>
  <div class="t" style="left:56px;top:70px;font-size:12px;color:#aaa">Filesystem</div>
  <svg style="left:128px;top:70px" width="12" height="10"><path d="M1.5 1l4 4-4 4M6.5 1l4 4-4 4" fill="none" stroke="#ccc" stroke-width="1.2"/></svg>
  <svg style="left:206px;top:68px" width="4" height="14"><g fill="#aaa"><circle cx="2" cy="2" r="1.4"/><circle cx="2" cy="7" r="1.4"/><circle cx="2" cy="12" r="1.4"/></g></svg>
  <div class="a" style="left:224px;top:61px;width:1px;height:108px;background:#444"></div>
  <svg style="left:15px;top:95px" width="8" height="6"><path d="M0 0h7l-3.5 5z" fill="#999"/></svg>
  <svg style="left:26px;top:92px" width="20" height="13"><path d="M5 12a4 4 0 0 1-0.5-8 5.5 5.5 0 0 1 10.5 1.2 3.4 3.4 0 0 1 0.5 6.8z" fill="none" stroke="#aaa" stroke-width="1.1"/></svg>
  <div class="t" style="left:49px;top:92px;font-size:12px;color:#ddd">127.0.0.1:65368</div>
  <svg style="left:27px;top:116px" width="8" height="6"><path d="M0 0h7l-3.5 5z" fill="#999"/></svg>
  <div class="a" style="left:42px;top:113px;width:14px;height:12px;background:#1c4f9a;border-radius:1px"></div>
  <div class="a" style="left:42px;top:111px;width:6px;height:3px;background:#1c4f9a"></div>
  <div class="t" style="left:61px;top:113px;font-size:12px;color:#ddd">appservice</div>
  <svg style="left:40px;top:134px" width="6" height="8"><path d="M0 0v7l5-3.5z" fill="#999"/></svg>
  <div class="a" style="left:54px;top:133px;width:14px;height:12px;background:#1c4f9a;border-radius:1px"></div>
  <div class="a" style="left:54px;top:131px;width:6px;height:3px;background:#1c4f9a"></div>
  <div class="t" style="left:73px;top:133px;font-size:12px;color:#ddd">__dev__</div>
  <div class="a" style="left:210px;top:89px;width:14px;height:80px;background:#2e2e2e"></div>
  <div class="a" style="left:211px;top:95px;width:12px;height:16px;border:1px solid #444;border-radius:1px"></div>
  <div class="a" style="left:210px;top:151px;width:14px;height:14px;background:#242424"></div>
  <div class="a" style="left:1px;top:151px;width:193px;height:14px;border:1px solid #444;border-radius:2px"></div>
  <!-- center -->
  <div class="a" style="left:225px;top:61px;width:329px;height:28px;background:#333;border-bottom:1px solid #3f3f3f"></div>
  <svg style="left:233px;top:68px" width="16" height="14"><rect x="1" y="1" width="14" height="12" fill="none" stroke="#999"/><line x1="4.5" y1="1" x2="4.5" y2="13" stroke="#999"/><path d="M11 4l-4 3 4 3z" fill="#999"/></svg>
  <svg style="left:530px;top:68px" width="16" height="14"><rect x="1" y="1" width="14" height="12" fill="none" stroke="#999"/><line x1="11.5" y1="1" x2="11.5" y2="13" stroke="#999"/><path d="M5 4l4 3-4 3z" fill="#999"/></svg>
  <div class="a" style="left:225px;top:89px;width:329px;height:50px;background:#393939;border-bottom:1px solid #4a4a4a"></div>
  <div class="t" style="left:333px;top:117px;font-size:13px;color:#ddd">Ctrl + P</div>
  <div class="t" style="left:404px;top:117px;font-size:13px;color:#ddd;letter-spacing:.3px">Open file</div>
  <div class="a" style="left:554px;top:61px;width:1px;height:108px;background:#444"></div>
  <!-- debugger -->
  <svg style="left:565px;top:68px" width="12" height="12"><rect x="1.5" y="2" width="3" height="8" fill="#ccc"/><rect x="6.5" y="2" width="3" height="8" fill="#ccc"/></svg>
  <svg style="left:591px;top:67px" width="20" height="14"><path d="M2 10a7 7 0 0 1 14-2" fill="none" stroke="#555" stroke-width="2"/><path d="M13 6l4 3 1-4z" fill="#555"/><circle cx="9" cy="11" r="1.6" fill="#555"/></svg>
  <svg style="left:622px;top:66px" width="10" height="16"><path d="M5 1v8M2 6l3 3 3-3" fill="none" stroke="#555" stroke-width="1.8"/><circle cx="5" cy="13" r="1.7" fill="#555"/></svg>
  <svg style="left:650px;top:66px" width="10" height="16"><path d="M5 13v-9M2 6l3-3 3 3" fill="none" stroke="#555" stroke-width="1.8"/><circle cx="5" cy="13" r="1.7" fill="#555"/></svg>
  <svg style="left:674px;top:68px" width="18" height="10"><path d="M1 5h9M7 2l3 3-3 3" fill="none" stroke="#555" stroke-width="1.8"/><circle cx="14" cy="5" r="1.7" fill="#555"/></svg>
  <div class="a" style="left:700px;top:66px;width:1px;height:16px;background:#444"></div>
  <svg style="left:710px;top:66px" width="20" height="16"><path d="M3 3h9l6 5-6 5h-9z" fill="#ccc"/><path d="M2 15l12-14" stroke="#333" stroke-width="2.5"/><path d="M2 15l12-14" stroke="#ccc" stroke-width="1.2"/></svg>
  <svg style="left:740px;top:66px" width="16" height="16"><circle cx="8" cy="8" r="7.5" fill="#ccc"/><rect x="5" y="4.5" width="2" height="7" fill="#333"/><rect x="9" y="4.5" width="2" height="7" fill="#333"/></svg>
  <div class="a" style="left:555px;top:89px;width:210px;height:22px;background:#333;border-bottom:1px solid #4a4a4a;border-top:1px solid #4a4a4a"></div>
  <svg style="left:563px;top:96px" width="6" height="8"><path d="M0 0v7l5-3.5z" fill="#aaa"/></svg>
  <div class="t" style="left:572px;top:94px;font-size:12px;color:#ddd">Watch</div>
  <div class="a" style="left:555px;top:111px;width:210px;height:21px;background:#383838;border-bottom:1px solid #3f3f3f"></div>
  <svg style="left:562px;top:118px" width="8" height="6"><path d="M0 0h7l-3.5 5z" fill="#aaa"/></svg>
  <div class="t" style="left:572px;top:116px;font-size:12px;color:#ddd">Call Stack</div>
  <div class="a" style="left:555px;top:132px;width:210px;height:28px;background:#242424;border-bottom:1px solid #4a4a4a"></div>
  <div class="t" style="left:630px;top:141px;font-size:11px;color:#888;font-style:italic">Not paused</div>
  <div class="a" style="left:765px;top:89px;width:14px;height:80px;background:#2a2a2a"></div>
  <div class="a" style="left:765px;top:89px;width:14px;height:21px;background:#333;border:1px solid #444"></div>
  <!-- drawer -->
  <div class="a" style="left:0;top:165px;width:779px;height:1px;background:#474747"></div>
  <div class="a" style="left:0;top:166px;width:779px;height:26px;background:#333;border-bottom:1px solid #444"></div>
  <svg style="left:14px;top:172px" width="4" height="14"><g fill="#aaa"><circle cx="2" cy="2" r="1.4"/><circle cx="2" cy="7" r="1.4"/><circle cx="2" cy="12" r="1.4"/></g></svg>
  <div class="t" style="left:37px;top:174px;font-size:12px;color:#aaa">Console</div>
  <div class="a" style="left:90px;top:166px;width:92px;height:26px;background:#000"></div>
  <div class="t" style="left:99px;top:174px;font-size:12px;color:#fff">What's New</div>
  <svg style="left:169px;top:175px" width="8" height="8"><path d="M0.5 0.5l7 7M7.5 0.5l-7 7" stroke="#aaa" stroke-width="1.1"/></svg>
  <div class="t" style="left:191px;top:174px;font-size:12px;color:#aaa">Animations</div>
  <svg style="left:758px;top:174px" width="11" height="11"><path d="M1 1l9 9M10 1l-9 9" stroke="#ccc" stroke-width="1.3"/></svg>
  <div class="a" style="left:0;top:192px;width:779px;height:27px;background:#333;border-bottom:1px solid #444"></div>
  <div class="t" style="left:15px;top:201px;font-size:12px;color:#fff">Highlights from the Chrome 80 update</div>
  <div class="a" style="left:0;top:220px;width:779px;height:49px;background:#262626"></div>
  <div class="t" style="left:18px;top:239px;font-size:14px;color:#bbb">Support for let and class redeclarations</div>
  <div class="t" style="left:18px;top:259px;font-size:12px;color:#6e6e6e;letter-spacing:.4px">When experimenting with new code in the Console, repeating let or class declarations</div>
  <div class="a" style="left:559px;top:240px;width:206px;height:29px;background:#2f80f8;overflow:hidden"><svg width="206" height="29"><g stroke="rgba(255,255,255,.22)" stroke-width="1" fill="none"><path d="M64 0v29M116 0v29M180 0v29M0 16.5h206M0 0l30 29M150 0l-30 29"/><circle cx="64" cy="40" r="60"/></g><path d="M130 -5A79 79 0 0 1 164 60" fill="none" stroke="#fff" stroke-width="3"/><path d="M20 40C30 22 50 16.5 75 16.5H147" fill="none" stroke="#fff" stroke-width="3"/><path d="M75 20.5H147" stroke="#2468d8" stroke-width="2"/></svg></div>
  <div class="a" style="left:765px;top:220px;width:14px;height:49px;background:#2a2a2a"></div>
  <div class="a" style="left:765px;top:222px;width:14px;height:14px;background:#3a3a3a;border:1px solid #555"></div>
</div>

<div id="top" class="a">
  <div class="t menu" style="left:12px">项目</div>
  <div class="t menu" style="left:48px">文件</div>
  <div class="t menu" style="left:84px">编辑</div>
  <div class="t menu" style="left:120px">工具</div>
  <div class="t menu" style="left:156px">转到</div>
  <div class="t menu" style="left:192px">选择</div>
  <div class="t menu" style="left:228px">视图</div>
  <div class="t menu" style="left:264px">界面</div>
  <div class="t menu" style="left:300px">设置</div>
  <div class="t menu" style="left:336px">帮助</div>
  <div class="t menu" style="left:372px">微信开发者工具</div>

  <!-- avatar -->
  <svg style="left:11px;top:42px" width="30" height="30"><rect x="0" y="0" width="30" height="30" rx="2.5" fill="#ebebef"/><path d="M8 2.5h14M10 5h10" stroke="#999" stroke-width="0.8"/><path d="M4 30V17c0-3 3-5 6-4l4 1 5-3 5-2 1 4 5 5-2 3-3 2v7z" fill="#4c5284"/><path d="M9 13c-2 2-2 6-1 9 2 3 6 3 8 1l2-5-3-4z" fill="#f4f4f8"/><path d="M15 15c2-1 4 0 4 3s-1 5-3 5-2-3-1-8z" fill="#a01820"/><path d="M24 19l6-1-4 6z" fill="#c87080"/><path d="M3 11l6-4 4 4-5 4z" fill="#6a1ab8"/><circle cx="11" cy="9" r="2.5" fill="#f4f4f8"/></svg>
  <!-- green buttons -->
  <div class="gbtn a" style="left:121px"><svg width="40" height="22"><rect x="16.5" y="5.5" width="7" height="11" fill="none" stroke="#fff" stroke-width="1"/><line x1="18.5" y1="7.5" x2="21.5" y2="7.5" stroke="#fff"/></svg></div>
  <div class="gbtn a" style="left:169px"><svg width="40" height="22"><path d="M14.5 8.5l-2.5 2.5 2.5 2.5M25.5 8.5l2.5 2.5-2.5 2.5M21.5 7.5l-3 7" fill="none" stroke="#fff" stroke-width="1.1"/></svg></div>
  <div class="gbtn a" style="left:217px"><svg width="40" height="22"><line x1="15" y1="8.5" x2="25" y2="8.5" stroke="#fff"/><line x1="15" y1="13.5" x2="25" y2="13.5" stroke="#fff"/><circle cx="17" cy="8.5" r="1.6" fill="#00b26a" stroke="#fff"/><circle cx="23" cy="13.5" r="1.6" fill="#00b26a" stroke="#fff"/></svg></div>
  <div class="hbtn a" style="left:265px;width:40px"><svg width="40" height="22"><path d="M20.5 6.2C18 6 16.8 7 16.8 10C14.5 10 13.3 11.3 13.3 12.8C13.3 14.5 14.7 15.5 16.3 15.5C18.5 15.5 19.5 13.5 20.5 12C21.5 10.5 22.5 9.8 23.5 9.8C25.2 9.8 26.5 11 26.5 12.7C26.5 14.3 25.3 15.5 23.8 15.5C23.2 15.5 22.7 15.2 22.4 14.8" fill="none" stroke="#e8e8e8" stroke-width="1.2"/></svg></div>
  <div class="t lbl" style="left:111px">模拟器</div>
  <div class="t lbl" style="left:159px">编辑器</div>
  <div class="t lbl" style="left:207px">调试器</div>
  <div class="t lbl" style="left:255px">云开发</div>
  <!-- mode dropdown -->
  <div class="hbtn a" style="left:417px;width:152px"><div class="t" style="left:8px;top:5px;font-size:13px;color:#f0f0f0">小程序模式</div><svg width="152" height="22"><path d="M133 10h6l-3 3z" fill="#eee"/></svg></div>
  <div class="a" style="left:577px;top:42px;width:1px;height:22px;background:#555"></div>
  <div class="hbtn a" style="left:586px;width:232px"><div class="t" style="left:8px;top:5px;font-size:13px;color:#f0f0f0">普通编译</div><svg width="232" height="22"><path d="M133 10h6l-3 3z" fill="#eee"/><line x1="152.5" y1="0" x2="152.5" y2="22" stroke="#6a6a6a"/><line x1="192.5" y1="0" x2="192.5" y2="22" stroke="#6a6a6a"/><path d="M171.2 4.8A6.5 6.5 0 1 0 177.7 11.3" fill="none" stroke="#eee" stroke-width="1.1"/><path d="M175.6 9.6l2.2 2.2 2-2.4" fill="none" stroke="#eee" stroke-width="1.1"/><path d="M203 11.3c3-5.8 14-5.8 17 0-3 5.8-14 5.8-17 0z" fill="none" stroke="#eee" stroke-width="1.1"/><circle cx="211.5" cy="11.3" r="2.6" fill="none" stroke="#eee" stroke-width="1.1"/></svg></div>
  <div class="t lbl" style="left:727px">编译</div>
  <div class="t lbl" style="left:767px">预览</div>
  <div class="hbtn a" style="left:830px;width:40px"><svg width="40" height="22"><ellipse cx="20" cy="12.5" rx="4.5" ry="5.5" fill="none" stroke="#eee"/><line x1="20" y1="7" x2="20" y2="18" stroke="#eee"/><path d="M17 7.5l-1-2M23 7.5l1-2M15.5 10.5h-2.5l-1-1.5M24.5 10.5h2.5l1-1.5M15.5 14h-3M24.5 14h3M16 16.5l-2.5 2M24 16.5l2.5 2" fill="none" stroke="#eee"/></svg></div>
  <div class="hbtn a" style="left:882px;width:40px"><svg width="40" height="22"><path d="M13.8 5.8v10.7M18.5 9v7.5" fill="none" stroke="#eee" stroke-width="1.1"/><path d="M13.8 11.2h10.5M21.5 8.3l3 2.9-3 2.9" fill="none" stroke="#eee" stroke-width="1.1"/></svg></div>
  <div class="hbtn a" style="left:930px;width:40px"><svg width="40" height="22"><path d="M9.5 8.5l6-3 6 3-6 3z M9.5 11.5l6 3 6-3 M9.5 14.5l6 3 6-3" fill="none" stroke="#eee"/><path d="M27 10h6l-3 3z" fill="#eee"/></svg></div>
  <div class="t lbl" style="left:820px">真机调试</div>
  <div class="t lbl" style="left:872px">切后台</div>
  <div class="t lbl" style="left:920px">清缓存</div>
  <!-- right -->
  <div class="a" style="left:1356px;top:6px;width:104px;height:25px;border-radius:4px;border:1px solid #1a97f5;background:linear-gradient(#e4f4ff,#c6e6fb);overflow:hidden">
    <div class="a" style="left:0;top:0;width:30px;height:23px;background:#1e9cf8"></div>
    <svg width="30" height="23" style="top:-1px"><circle cx="15" cy="9" r="3.6" fill="none" stroke="#fff" stroke-width="2"/><circle cx="10.5" cy="14.5" r="3.6" fill="none" stroke="#fff" stroke-width="2"/><circle cx="19.5" cy="14.5" r="3.6" fill="none" stroke="#fff" stroke-width="2"/></svg>
    <div class="t" style="left:41px;top:5px;font-size:12px;color:#333">拖拽上传</div>
  </div>
  <svg style="left:1477px;top:6px" width="17" height="17"><rect x="0.5" y="3.5" width="12" height="12" fill="none" stroke="#fff" stroke-width="1.2"/><path d="M3.5 0.5h12.5v12.5" fill="none" stroke="#fff" stroke-width="1.2"/></svg>
  <svg style="left:1514px;top:7px" width="14" height="14"><path d="M1 1l12 12M13 1l-12 12" stroke="#fff" stroke-width="1.2"/></svg>
  <div class="hbtn a" style="left:1355px;width:40px"><svg width="40" height="22"><path d="M15.5 10.5v5h9v-5M20 15V6M17 9l3-3 3 3" fill="none" stroke="#eee"/></svg></div>
  <div class="hbtn a" style="left:1407px;width:40px"><svg width="40" height="22"><circle cx="17" cy="6" r="1.6" fill="none" stroke="#eee"/><circle cx="17" cy="16" r="1.6" fill="none" stroke="#eee"/><circle cx="23.5" cy="10" r="1.6" fill="none" stroke="#eee"/><path d="M17 7.6v6.8M22 10.8l-4 4" fill="none" stroke="#eee"/></svg></div>
  <div class="hbtn a" style="left:1459px;width:40px"><svg width="40" height="22"><path d="M14.5 7.5h11M14.5 11.5h11M14.5 15.5h11" stroke="#eee"/></svg></div>
  <div class="t lbl" style="left:1345px">上传</div>
  <div class="t lbl" style="left:1397px">版本管理</div>
  <div class="t lbl" style="left:1449px">详情</div>
  <div class="t" style="left:632px;top:7px;font-size:13px;color:#b0b0b0">天狼影院吧</div><div class="t" style="left:703px;top:8px;font-size:12px;color:#8c8c8c">-</div><div class="t" style="left:712px;top:8px;font-size:12px;color:#8c8c8c">微信开发者工具</div><div class="t" style="left:801px;top:8px;font-size:12.5px;color:#8c8c8c;letter-spacing:-.1px">Stable 1.03.2010240</div>
</div>
</body></html>
